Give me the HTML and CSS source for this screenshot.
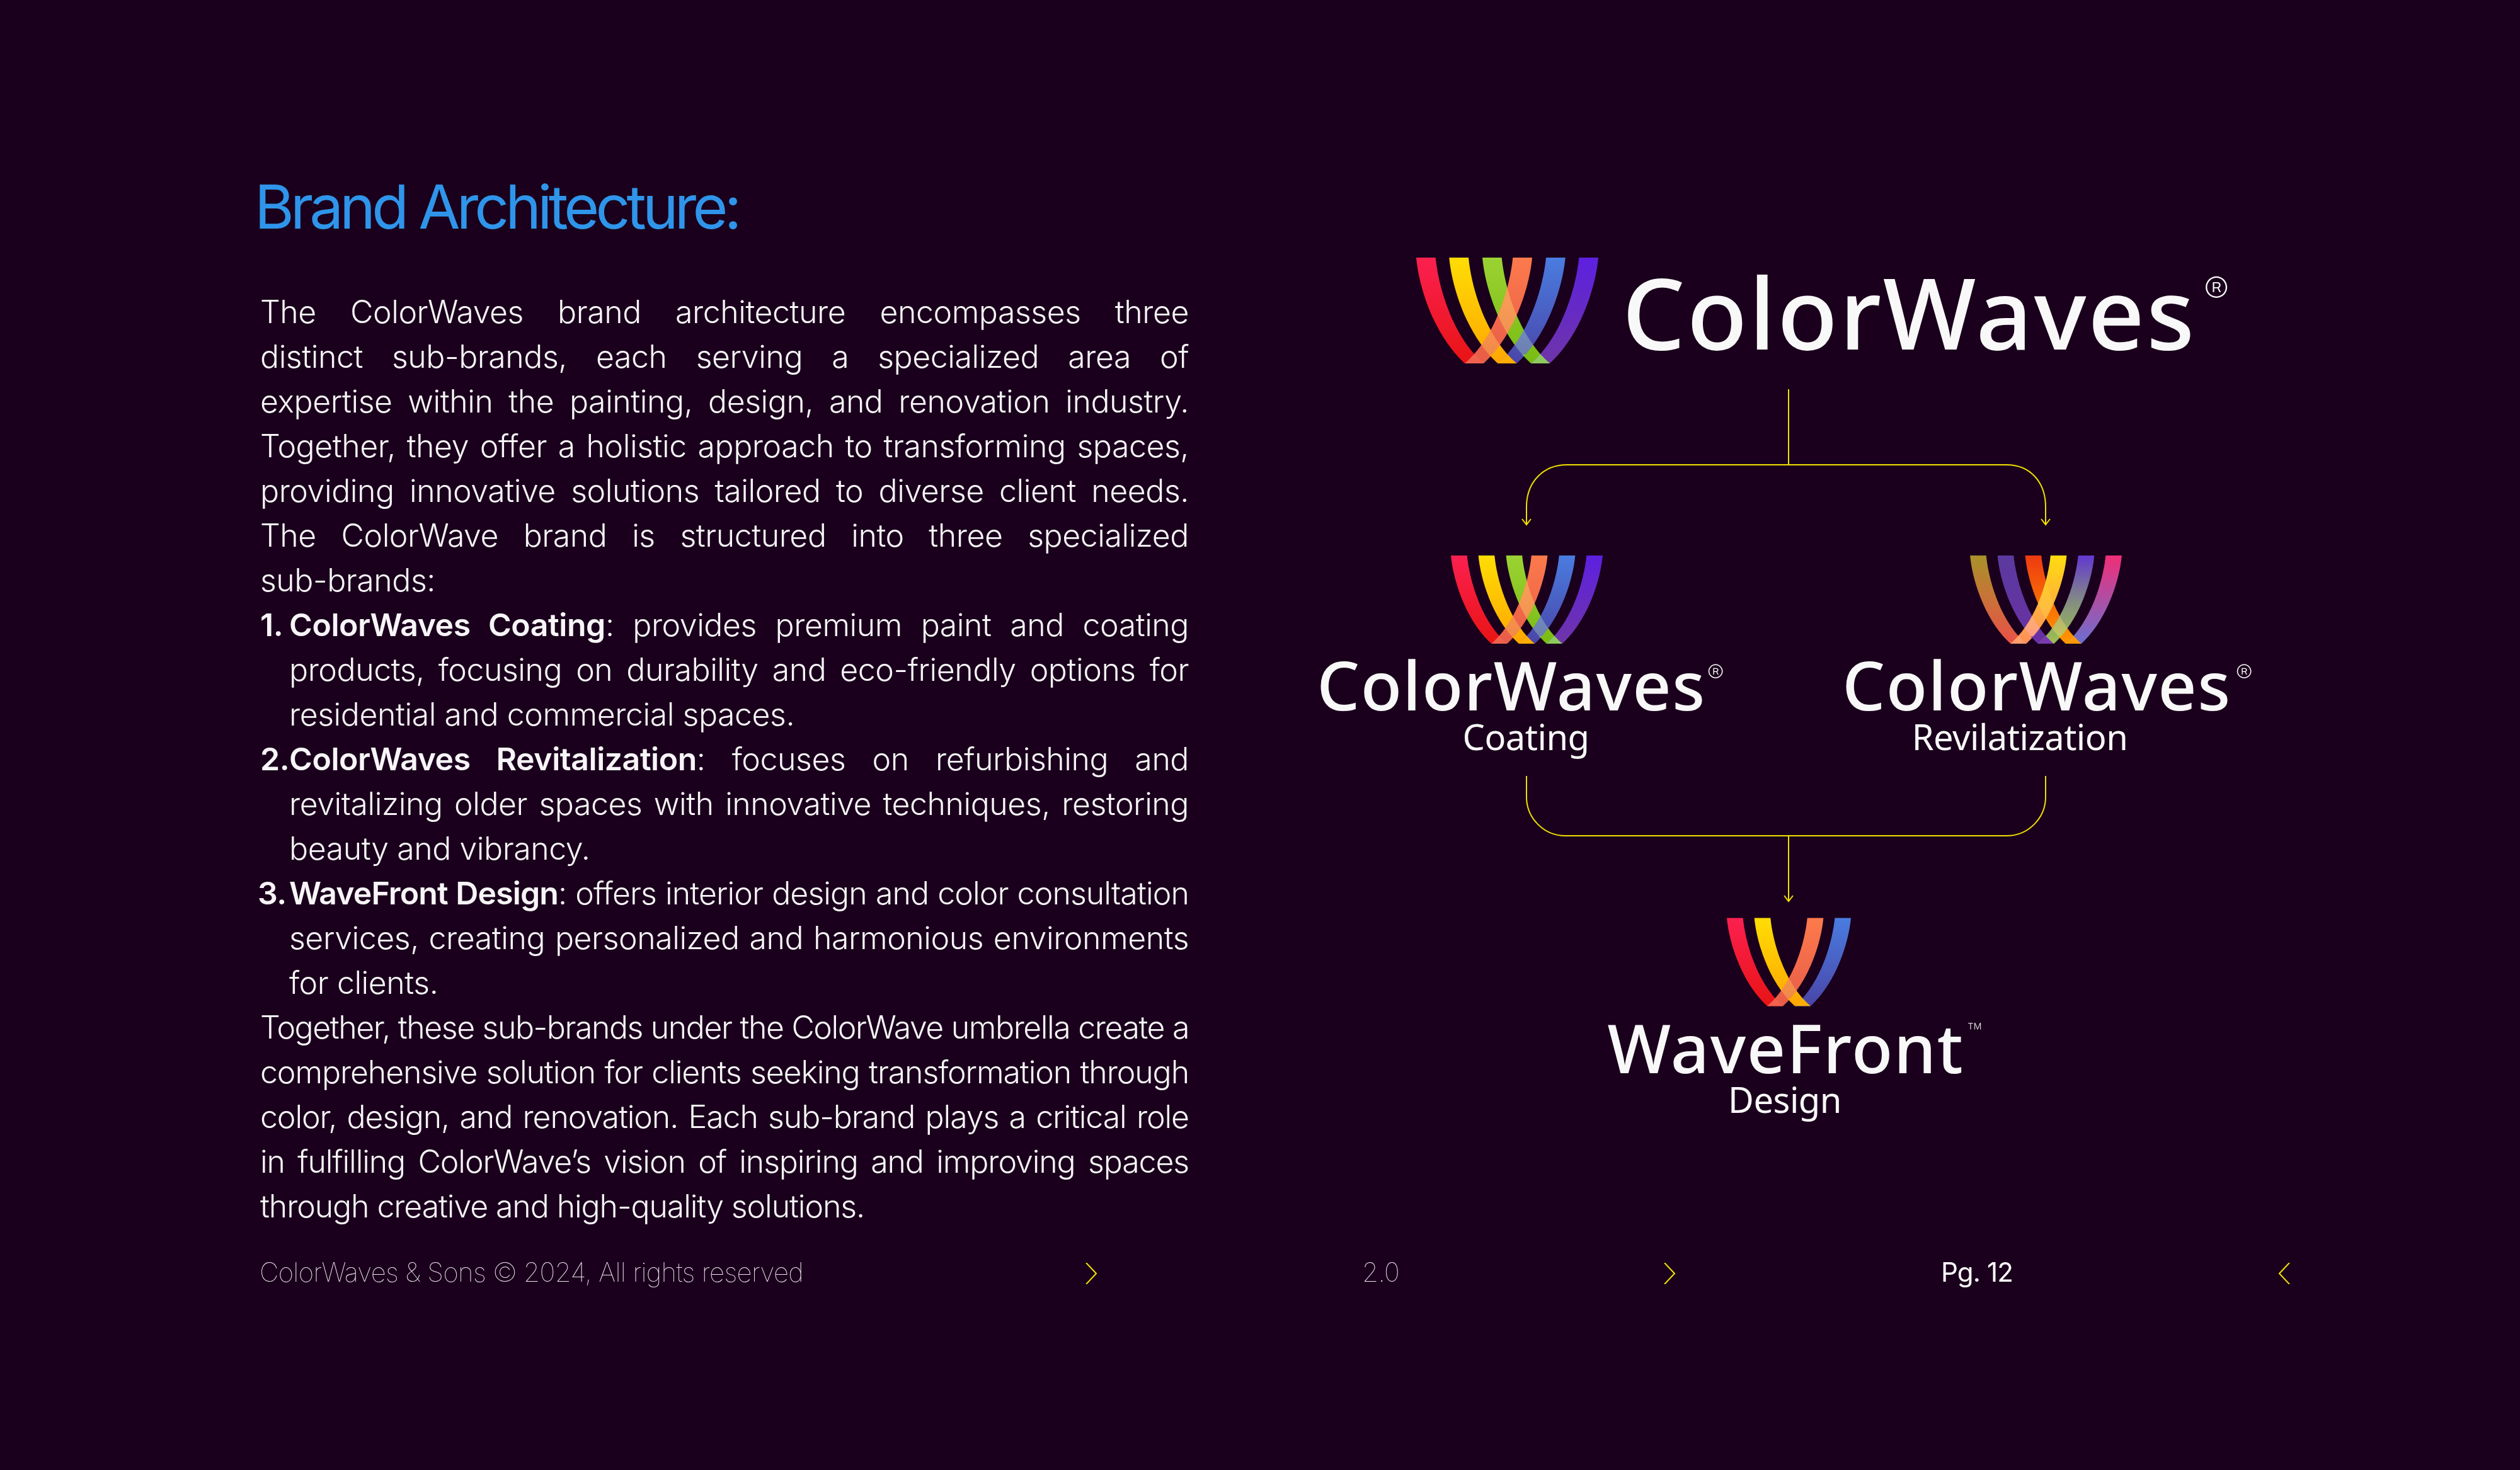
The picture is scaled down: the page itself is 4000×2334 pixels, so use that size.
FILE: index.html
```html
<!DOCTYPE html>
<html lang="en">
<head>
<meta charset="utf-8">
<title>Brand Architecture</title>
<link rel="stylesheet" href="styles.css">
</head>
<body>
<svg class="defs" width="0" height="0" aria-hidden="true">
  <defs>
    <linearGradient id="gr" x1="0" y1="0" x2="0" y2="1"><stop offset="0" stop-color="#fb2050"/><stop offset="1" stop-color="#e81414"/></linearGradient>
    <linearGradient id="gy" x1="0" y1="0" x2="0" y2="1"><stop offset="0" stop-color="#ffdd05"/><stop offset="1" stop-color="#ffa600"/></linearGradient>
    <linearGradient id="gg" x1="0" y1="0" x2="0" y2="1"><stop offset="0" stop-color="#9bd233"/><stop offset="1" stop-color="#78bc12"/></linearGradient>
    <linearGradient id="go" x1="0" y1="0" x2="0" y2="1"><stop offset="0" stop-color="#fc7a4c"/><stop offset="1" stop-color="#e85c48"/></linearGradient>
    <linearGradient id="gb" x1="0" y1="0" x2="0" y2="1"><stop offset="0" stop-color="#4a7ce0"/><stop offset="1" stop-color="#4a45a8"/></linearGradient>
    <linearGradient id="gp" x1="0" y1="0" x2="0" y2="1"><stop offset="0" stop-color="#5d20e0"/><stop offset="1" stop-color="#6e35a8"/></linearGradient>
    <linearGradient id="r1" x1="0" y1="0" x2="0" y2="1"><stop offset="0" stop-color="#a8922a"/><stop offset="1" stop-color="#ea5048"/></linearGradient>
    <linearGradient id="r2" x1="0" y1="0" x2="0" y2="1"><stop offset="0" stop-color="#5a3a9e"/><stop offset="1" stop-color="#6a30a4"/></linearGradient>
    <linearGradient id="r3" x1="0" y1="0" x2="0" y2="1"><stop offset="0" stop-color="#ee3a10"/><stop offset="1" stop-color="#ff9800"/></linearGradient>
    <linearGradient id="r4" x1="0" y1="0" x2="0" y2="1"><stop offset="0" stop-color="#ffdc10"/><stop offset="1" stop-color="#ff8e5c"/></linearGradient>
    <linearGradient id="r5" x1="0" y1="0" x2="0" y2="1"><stop offset="0" stop-color="#6238d0"/><stop offset=".55" stop-color="#85907f"/><stop offset="1" stop-color="#9cc050"/></linearGradient>
    <linearGradient id="r6" x1="0" y1="0" x2="0" y2="1"><stop offset="0" stop-color="#f02e78"/><stop offset="1" stop-color="#6a70d0"/></linearGradient>
    <path id="st" d="M0 0H30.7C35 45 57 125 107 168H77C27 122 4 45 0 0Z"/>
    <clipPath id="clip-six">
      <use href="#st" transform="translate(184 0) scale(-1 1)"/>
      <use href="#st" transform="translate(236.7 0) scale(-1 1)"/>
      <use href="#st" transform="translate(289 0) scale(-1 1)"/>
    </clipPath>
    <clipPath id="clip-four">
      <use href="#st" transform="translate(183.7 0) scale(-1 1)"/>
      <use href="#st" transform="translate(236 0) scale(-1 1)"/>
    </clipPath>
    <clipPath id="clip-tip"><rect x="0" y="154" width="289" height="14"/></clipPath>
    <symbol id="logo-six" viewBox="0 0 289 168">
      <use href="#st" fill="url(#gr)"/>
      <use href="#st" x="52.3" fill="url(#gy)"/>
      <use href="#st" x="105" fill="url(#gg)"/>
      <g transform="translate(289 0) scale(-1 1)">
        <use href="#st" x="105" fill="url(#go)"/>
        <use href="#st" x="52.3" fill="url(#gb)"/>
        <use href="#st" fill="url(#gp)"/>
      </g>
      <g class="glow" clip-path="url(#clip-six)">
        <use href="#st" fill="url(#gr)"/>
        <use href="#st" x="52.3" fill="url(#gy)"/>
        <use href="#st" x="105" fill="url(#gg)"/>
      </g>
      <g clip-path="url(#clip-six)">
        <g clip-path="url(#clip-tip)">
          <use href="#st" x="52.3" fill="#ffae00"/>
          <use href="#st" x="105" fill="#8fca5e"/>
        </g>
      </g>
    </symbol>
    <symbol id="logo-rev" viewBox="0 0 289 168">
      <use href="#st" fill="url(#r1)"/>
      <use href="#st" x="52.3" fill="url(#r2)"/>
      <use href="#st" x="105" fill="url(#r3)"/>
      <g transform="translate(289 0) scale(-1 1)">
        <use href="#st" x="105" fill="url(#r4)"/>
        <use href="#st" x="52.3" fill="url(#r5)"/>
        <use href="#st" fill="url(#r6)"/>
      </g>
      <g class="glow" clip-path="url(#clip-six)">
        <use href="#st" fill="url(#r1)"/>
        <use href="#st" x="52.3" fill="url(#r2)"/>
        <use href="#st" x="105" fill="url(#r3)"/>
      </g>
      <g clip-path="url(#clip-six)">
        <g clip-path="url(#clip-tip)">
          <use href="#st" x="52.3" fill="#7a3ab0"/>
          <use href="#st" x="105" fill="#ff9a0a"/>
        </g>
      </g>
    </symbol>
    <symbol id="logo-four" viewBox="0 0 236 168">
      <use href="#st" fill="url(#gr)"/>
      <use href="#st" x="52.3" fill="url(#gy)"/>
      <g transform="translate(236 0) scale(-1 1)">
        <use href="#st" x="52.3" fill="url(#go)"/>
        <use href="#st" fill="url(#gb)"/>
      </g>
      <g class="glow" clip-path="url(#clip-four)">
        <use href="#st" fill="url(#gr)"/>
        <use href="#st" x="52.3" fill="url(#gy)"/>
      </g>
      <g clip-path="url(#clip-four)">
        <g clip-path="url(#clip-tip)">
          <use href="#st" x="52.3" fill="#ffae00"/>
        </g>
      </g>
    </symbol>
  </defs>
</svg>

<main class="slide">
  <div class="content">
    <section class="copy">
      <h1 class="title">Brand Architecture:</h1>
      <div class="body">
        <p>
          <span class="ln">The ColorWaves brand architecture encompasses three</span>
          <span class="ln">distinct sub-brands, each serving a specialized area of</span>
          <span class="ln">expertise within the painting, design, and renovation industry.</span>
          <span class="ln">Together, they offer a holistic approach to transforming spaces,</span>
          <span class="ln">providing innovative solutions tailored to diverse client needs.</span>
          <span class="ln">The ColorWave brand is structured into three specialized</span>
          <span class="ln end">sub-brands:</span>
        </p>
        <ol class="list">
          <li class="item"><span class="num">1.</span><span class="lines">
            <span class="ln"><strong>ColorWaves Coating</strong>: provides premium paint and coating</span>
            <span class="ln">products, focusing on durability and eco-friendly options for</span>
            <span class="ln end">residential and commercial spaces.</span></span></li>
          <li class="item"><span class="num">2.</span><span class="lines">
            <span class="ln"><strong>ColorWaves Revitalization</strong>: focuses on refurbishing and</span>
            <span class="ln">revitalizing older spaces with innovative techniques, restoring</span>
            <span class="ln end">beauty and vibrancy.</span></span></li>
          <li class="item"><span class="num num-three">3.</span><span class="lines">
            <span class="ln close"><strong>WaveFront Design</strong>: offers interior design and color consultation</span>
            <span class="ln">services, creating personalized and harmonious environments</span>
            <span class="ln end">for clients.</span></span></li>
        </ol>
        <p class="closing">
          <span class="ln tightest">Together, these sub-brands under the ColorWave umbrella create a</span>
          <span class="ln">comprehensive solution for clients seeking transformation through</span>
          <span class="ln">color, design, and renovation. Each sub-brand plays a critical role</span>
          <span class="ln">in fulfilling ColorWave’s vision of inspiring and improving spaces</span>
          <span class="ln end">through creative and high-quality solutions.</span>
        </p>
      </div>
    </section>

    <section class="diagram">
      <svg class="links" viewBox="2000 280 2000 1800" fill="none">
        <path d="M2839 618V738"/>
        <path d="M2423 833V805C2423 765 2450 738 2487 738H3185C3222 738 3247 765 3247 805V833"/>
        <path d="M2416 824L2423 833L2430 824M3240 824L3247 833L3254 824"/>
        <path d="M2423 1232V1265A62 62 0 0 0 2485 1327H3185A62 62 0 0 0 3247 1265V1232"/>
        <path d="M2839 1327V1431M2832 1422L2839 1431L2846 1422"/>
      </svg>

      <div class="node node-master">
        <svg class="logo-lg"><use href="#logo-six"/></svg>
        <div class="name name-lg">ColorWaves<span class="mark mark-lg">®</span></div>
      </div>
      <div class="node node-coating">
        <svg class="logo-md"><use href="#logo-six"/></svg>
        <div class="name name-md name-coating">ColorWaves<span class="mark mark-md">®</span></div>
        <div class="sub sub-coating">Coating</div>
      </div>
      <div class="node node-revital">
        <svg class="logo-md"><use href="#logo-rev"/></svg>
        <div class="name name-md name-revital">ColorWaves<span class="mark mark-md mark-far">®</span></div>
        <div class="sub sub-revital">Revilatization</div>
      </div>
      <div class="node node-front">
        <svg class="logo-sm"><use href="#logo-four"/></svg>
        <div class="name name-md name-front">WaveFront<span class="mark mark-tm">™</span></div>
        <div class="sub sub-front">Design</div>
      </div>
    </section>
  </div>

  <footer class="footer">
    <span class="foot-note">ColorWaves &amp; Sons © 2024, All rights reserved</span>
    <svg class="chev" viewBox="0 0 18 34"><path d="M1 0L17 17L1 34"/></svg>
    <span class="foot-note foot-version">2.0</span>
    <svg class="chev" viewBox="0 0 18 34"><path d="M1 0L17 17L1 34"/></svg>
    <span class="foot-page">Pg. 12</span>
    <svg class="chev" viewBox="0 0 18 34"><path d="M17 0L1 17L17 34"/></svg>
  </footer>
</main>
</body>
</html>
```
FILE: styles.css
```css
* { box-sizing: border-box; }
html, body { margin: 0; padding: 0; }
body { background: #1a001c; color: #fff; font-family: "Inter", "Liberation Sans", sans-serif; }
.defs { position: absolute; }
.slide { width: 4000px; height: 2334px; padding-top: 280px; overflow: hidden; }
.content { display: flex; height: 1715px; }
.copy { width: 2000px; flex: none; padding-left: 404px; }
.title { margin: 0 0 84px; font-size: 96px; line-height: 96px; font-weight: 400; letter-spacing: -5.85px; color: #2f95ea; }
.body { width: 1474px; margin-left: 9px; font-size: 50px; line-height: 71px; font-weight: 300; letter-spacing: -.45px; color: #f7f5f7; }
.body p { margin: 0; }
.body .closing { letter-spacing: -1.1px; }
.ln { display: block; white-space: nowrap; text-align: justify; text-align-last: justify; }
.ln.end { text-align-last: left; }
.ln.close { letter-spacing: -.9px; }
.ln.tightest { letter-spacing: -1.45px; }
.list { margin: 0; padding: 0; list-style: none; }
.item { display: flex; }
.num { flex: none; width: 46px; font-weight: 600; }
.num-three { margin-left: -4px; width: 50px; }
.lines { flex: 1; min-width: 0; }
.body strong { font-weight: 600; }

.glow { opacity: .4; mix-blend-mode: screen; }

.diagram { position: relative; flex: none; width: 2000px; height: 1715px; }
.links { position: absolute; left: 0; top: 0; width: 2000px; height: 1800px; stroke: #f2e000; stroke-width: 2; }
.node { position: absolute; display: flex; flex-direction: column; align-items: center; width: 800px; }
.node-master { left: 248px; top: 129px; width: auto; flex-direction: row; align-items: flex-start; }
.node-coating { left: 23px; top: 602px; }
.node-revital { left: 847px; top: 602px; }
.node-front { left: 439px; top: 1177px; }
.logo-lg { width: 289px; height: 168px; flex: none; }
.logo-md { width: 241px; height: 140px; flex: none; }
.logo-sm { width: 197px; height: 141px; flex: none; }
.name { position: relative; font-family: "Noto Sans", sans-serif; font-weight: 500; color: #f8f8f8; white-space: nowrap; }
.name-lg { font-size: 157px; line-height: 180px; margin-left: 38px; margin-top: -5px; letter-spacing: 2.7px; }
.name-md { font-size: 107px; line-height: 110px; margin-top: 10px; letter-spacing: 1.5px; }
.name-coating { margin-right: 48px; }
.name-revital { margin-right: 28px; }
.name-front { margin-right: 9px; letter-spacing: 1.7px; }
.sub { font-family: "Noto Sans", sans-serif; font-size: 56px; line-height: 60px; font-weight: 400; letter-spacing: -.5px; color: #f8f8f8; margin-top: -3px; }
.sub-coating { margin-right: 2px; }
.sub-revital { margin-right: 82px; }
.sub-front { margin-right: 12px; }
.mark { position: absolute; left: 100%; font-family: "Inter", sans-serif; font-weight: 200; letter-spacing: 0; }
.mark-lg { font-size: 60px; line-height: 60px; top: 27px; margin-left: 12px; }
.mark-md { font-size: 40px; line-height: 40px; top: 18px; margin-left: 2px; }
.mark-far { margin-left: 7px; }
.mark-tm { font-size: 40px; line-height: 40px; top: 11px; margin-left: 5px; color: #d8d0d8; }

.footer { display: grid; grid-template-columns: 1311px 441px 477px 442px 534px 18px; align-items: center; padding-left: 412px; height: 50px; }
.foot-note { font-size: 42px; line-height: 50px; font-weight: 100; letter-spacing: -.65px; color: #f0e8f0; }
.foot-version { margin-left: -2px; }
.foot-page { font-size: 42px; line-height: 50px; font-weight: 400; letter-spacing: -.8px; margin-left: -2px; color: #fff; }
.chev { width: 18px; height: 34px; margin-top: 4px; fill: none; stroke: #f2e000; stroke-width: 2; }
```
